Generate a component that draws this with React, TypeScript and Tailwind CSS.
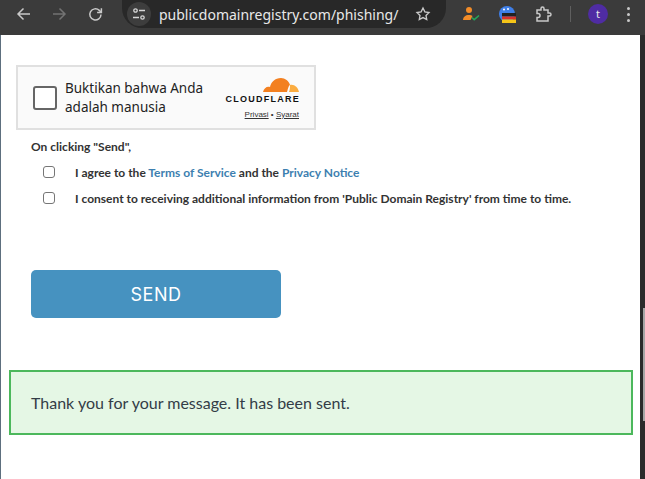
import React from "react";

function Nav() {
  return (
    <div className="flex h-[35px] shrink-0 items-start bg-[#3b3b3b]">
      <div className="flex h-[28px] items-center">
        <svg className="ml-[16px]" width="15" height="14" viewBox="0 0 15 14" fill="none" stroke="#c9c9c9" strokeWidth="1.5"><path d="M14 7H2M7.5 1.5 2 7l5.5 5.5" /></svg>
        <svg className="ml-[21px]" width="15" height="14" viewBox="0 0 15 14" fill="none" stroke="#737373" strokeWidth="1.5"><path d="M1 7h12M7.5 1.5 13 7l-5.5 5.5" /></svg>
        <svg className="ml-[21px]" width="15" height="15" viewBox="0 0 15 15" fill="none" stroke="#c9c9c9" strokeWidth="1.5"><path d="M13 7.5A5.6 5.6 0 1 1 11.3 3.4L13.2 5.2" /><path d="M13.4 1.2v4.3H9.1" /></svg>
      </div>
      <div className="ml-[19px] flex h-[28px] w-[324px] items-center rounded-b-[20px] rounded-tl-none bg-[#282828] pl-[5px]">
        <div className="flex h-[24px] w-[24px] items-center justify-center rounded-full bg-[#3d3d3d]">
          <svg width="14" height="14" viewBox="0 0 14 14" fill="none" stroke="#d6d6d6" strokeWidth="1.3"><circle cx="3.5" cy="3.5" r="1.7" /><path d="M7 3.5h6M1 10.5h6" /><circle cx="10.5" cy="10.5" r="1.7" /></svg>
        </div>
        <span className="ml-[8px] font-['Noto_Sans',sans-serif] text-[14px] text-[#e8e8e8]">publicdomainregistry.com/phishing/</span>
        <svg className="ml-auto mr-[15px]" width="16" height="16" viewBox="0 0 24 24" fill="none" stroke="#c9c9c9" strokeWidth="2"><path d="m12 3 2.8 5.8 6.2.9-4.5 4.4 1.1 6.3L12 17.4l-5.6 3 1.1-6.3L3 9.700l6.200-.9z" /></svg>
      </div>
      <div className="flex h-[28px] flex-1 items-center">
        <svg className="ml-[17px]" width="17" height="16" viewBox="0 0 17 16"><circle cx="6" cy="4" r="3" fill="#f28c28" /><path d="M0 14c0-3 2.500-5 6-5 1.500 0 2.500.3 3.500 1L7.500 14z" fill="#f28c28" /><path d="m9 11.500 2.200 2.200L16 9.500" fill="none" stroke="#25a65a" strokeWidth="1.600" /></svg>
        <svg className="ml-[19px]" width="17" height="17" viewBox="0 0 17 17"><circle cx="8" cy="8" r="8" fill="#3f7fe8" /><circle cx="5" cy="3.500" r="1" fill="#fff" /><circle cx="9" cy="3" r="1" fill="#fff" /><rect x="3" y="7" width="14" height="3.500" fill="#222" /><rect x="3" y="10.500" width="14" height="3" fill="#d9342b" /><rect x="3" y="13.500" width="14" height="3.500" fill="#f5c518" /></svg>
        <svg className="ml-[20px]" width="17" height="16" viewBox="0 0 17 16" fill="none" stroke="#c9c9c9" strokeWidth="1.500"><path d="M1 4h4V2.500a1.500 1.500 0 0 1 3 0V4h4v3h1.500a1.500 1.500 0 0 1 0 3H12v5H1v-3.500h1a2 2 0 0 0 0-4H1z" /></svg>
        <div className="ml-[17px] h-[16px] w-[1px] bg-[#5f5f5f]" />
        <div className="ml-[17px] flex h-[20px] w-[20px] items-center justify-center rounded-full bg-[#4f2ca3] font-['Noto_Sans',sans-serif] text-[11px] text-[#e8e8e8]">t</div>
        <div className="ml-[19px] flex flex-col gap-[3px]">
          <span className="block h-[3px] w-[3px] rounded-full bg-[#c9c9c9]" />
          <span className="block h-[3px] w-[3px] rounded-full bg-[#c9c9c9]" />
          <span className="block h-[3px] w-[3px] rounded-full bg-[#c9c9c9]" />
        </div>
      </div>
    </div>
  );
}

function Turnstile() {
  return (
    <div className="ml-[15px] flex h-[65px] w-[300px] items-center border-2 border-[#e0e0e0] bg-[#fafafa] font-['Noto_Sans',sans-serif]">
      <div className="ml-[15px] h-[24px] w-[24px] shrink-0 rounded-[3px] border-2 border-[#666666] bg-white" />
      <div className="ml-[8px] w-[150px] text-[13.500px] leading-[19px] text-[#232323]">Buktikan bahwa Anda adalah manusia</div>
      <div className="ml-auto mr-[15px] flex flex-col items-end">
        <svg width="36" height="17" viewBox="0 0 36 17"><path d="M0 16c1-4 4-6 7-5 1-5 5-9 11-9 4 0 8 3 9 7-1 0-2 3-3 7z" fill="#f38020" /><path d="M26 16c1-3 1-5 1-7 4-1 8 2 9 7z" fill="#fbad41" /></svg>
        <div className="font-['Liberation_Sans',sans-serif] text-[9px] font-bold leading-[11px] tracking-[1.250px] text-[#111111] mt-[1px] mr-[-1px]">CLOUDFLARE</div>
        <div className="mt-[5px] font-['Liberation_Sans',sans-serif] text-[8px] leading-[10px] text-[#333333]"><span className="underline">Privasi</span> • <span className="underline">Syarat</span></div>
      </div>
    </div>
  );
}

function Consent({ children }: { children: React.ReactNode }) {
  return (
    <div className="flex items-start">
      <span className="mt-[1px] h-[12px] w-[12px] shrink-0 rounded-[3px] border border-[#767676] bg-white" />
      <span className="ml-[20px] text-[12px] font-bold leading-[16px] text-[#333333]">{children}</span>
    </div>
  );
}

export default function App() {
  return (
    <div className="flex h-[479px] w-[645px] flex-col overflow-hidden bg-white font-['Lato',sans-serif]">
      <Nav />
      <div className="flex flex-1 min-h-0">
        <div className="w-[1px] bg-[#5d6f7e]" />
        <main className="flex-1 pt-[30px]">
          <Turnstile />
          <div className="ml-[30px] mt-[9px] text-[12px] font-bold leading-[16px] text-[#333333]">On clicking "Send",</div>
          <div className="ml-[42px] mt-[10px] flex flex-col gap-[10px]">
            <Consent>I agree to the <span className="text-[#3d7fb0]">Terms of Service</span> and the <span className="text-[#3d7fb0]">Privacy Notice</span></Consent>
            <Consent>I consent to receiving additional information from 'Public Domain Registry' from time to time.</Consent>
          </div>
          <button className="ml-[30px] mt-[63px] flex h-[48px] w-[250px] items-center justify-center rounded-[5px] bg-[#4692c0] font-['Inter',sans-serif] text-[18px] tracking-[0.500px] text-white">SEND</button>
          <div className="ml-[8px] mt-[52px] flex h-[65px] w-[624px] items-center border-2 border-[#4cb85c] bg-[#e5f7e5] pl-[20px] text-[16px] text-[#333d47]">Thank you for your message. It has been sent.</div>
        </main>
        <div className="w-[5px] bg-[#2b2b2b] pl-[3px] pt-[273px]">
          <div className="h-[113px] w-[2px] bg-[#a6a6a6]" />
        </div>
      </div>
    </div>
  );
}
